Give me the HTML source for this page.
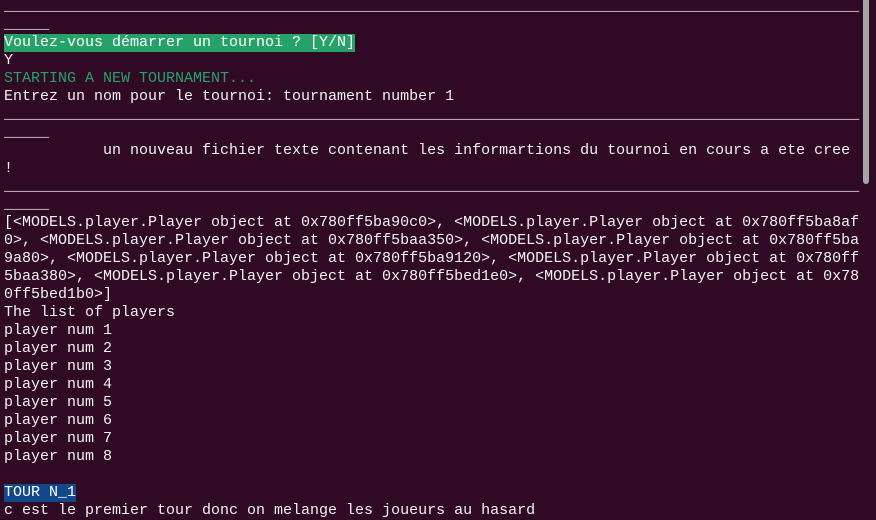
<!DOCTYPE html>
<html><head><meta charset="utf-8"><style>
html,body{margin:0;padding:0;}
body{width:876px;height:519px;background:#300a24;overflow:hidden;position:relative;}
pre{position:absolute;left:4px;top:-2px;margin:0;font-family:"Liberation Mono","DejaVu Sans Mono",monospace;font-size:15px;line-height:18px;color:#f2f2f2;white-space:pre;}
.g{color:#26a269}
.gb{background:#26a269;color:#fff;display:inline-block;height:18px}
.bb{background:#12488b;color:#fff;display:inline-block;height:18px}
.sb{position:absolute;left:863px;top:0;width:6px;height:184px;background:#a7a4a6;border-radius:0 0 3px 3px;}
</style></head><body>
<pre>_______________________________________________________________________________________________
_____
<span class="gb">Voulez-vous démarrer un tournoi ? [Y/N]</span>
Y
<span class="g">STARTING A NEW TOURNAMENT...</span>
Entrez un nom pour le tournoi: tournament number 1
_______________________________________________________________________________________________
_____
           un nouveau fichier texte contenant les informartions du tournoi en cours a ete cree
!
_______________________________________________________________________________________________
_____
[&lt;MODELS.player.Player object at 0x780ff5ba90c0&gt;, &lt;MODELS.player.Player object at 0x780ff5ba8af
0&gt;, &lt;MODELS.player.Player object at 0x780ff5baa350&gt;, &lt;MODELS.player.Player object at 0x780ff5ba
9a80&gt;, &lt;MODELS.player.Player object at 0x780ff5ba9120&gt;, &lt;MODELS.player.Player object at 0x780ff
5baa380&gt;, &lt;MODELS.player.Player object at 0x780ff5bed1e0&gt;, &lt;MODELS.player.Player object at 0x78
0ff5bed1b0&gt;]
The list of players
player num 1
player num 2
player num 3
player num 4
player num 5
player num 6
player num 7
player num 8

<span class="bb">TOUR N_1</span>
c est le premier tour donc on melange les joueurs au hasard</pre>
<div class="sb"></div>
</body></html>
